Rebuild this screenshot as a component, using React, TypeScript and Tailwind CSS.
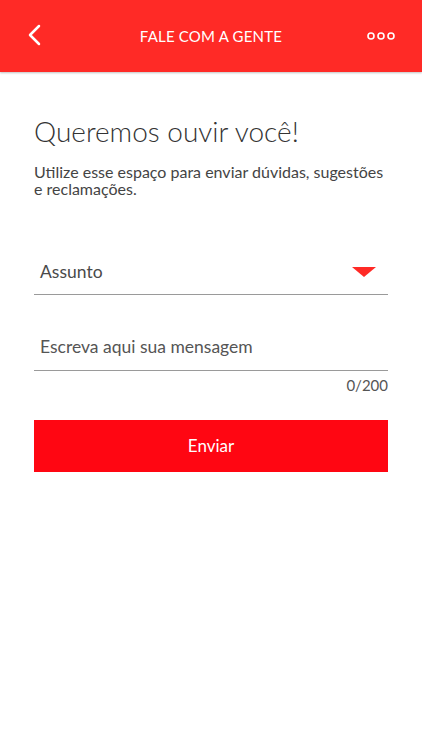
export default function App() {
  return (
    <div
      className="min-h-[750px] w-full bg-white"
      style={{ fontFamily: "Lato, 'Open Sans', sans-serif" }}
    >
      <Header />
      <div className="px-[34px] pt-[42px]">
        <h1 className="text-[28px] font-light leading-[34px] text-[#333]">
          Queremos ouvir você!
        </h1>
        <p className="mt-[15px] w-[352px] text-[16px] leading-[17px] text-[#444]">
          Utilize esse espaço para enviar dúvidas, sugestões e reclamações.
        </p>

        <div className="mt-[63px] flex items-center justify-between border-b border-[#9a9a9a] pb-[10px] pl-[6px] pr-[12px]">
          <span className="text-[17.5px] leading-[24px] text-[#4a4a4a]">Assunto</span>
          <svg width="24" height="10" viewBox="0 0 24 10">
            <path d="M0 0 L24 0 L12 10 Z" fill="#ff2a26" />
          </svg>
        </div>

        <div className="mt-[40px] border-b border-[#9a9a9a] pb-[11px] pl-[6px]">
          <span className="text-[17.5px] leading-[24px] text-[#555]">
            Escreva aqui sua mensagem
          </span>
        </div>
        <div className="mt-[3px] text-right text-[15px] text-[#555]">0/200</div>

        <button className="mt-[23px] flex h-[52px] w-full items-center justify-center bg-[#ff0612] text-[17px] text-white">
          Enviar
        </button>
      </div>
    </div>
  );
}

function Header() {
  return (
    <div className="grid h-[72px] grid-cols-[80px_1fr_80px] items-center bg-[#ff2a26] shadow-[0_1px_2px_rgba(0,0,0,0.25)]">
      <div className="pl-[26px]">
        <svg width="16" height="22" viewBox="0 0 16 22" className="mt-[-2px]">
          <path
            d="M13 2 L4 11 L13 20"
            fill="none"
            stroke="white"
            strokeWidth="2.5"
            strokeLinecap="round"
            strokeLinejoin="round"
          />
        </svg>
      </div>
      <span className="text-center text-[15px] tracking-[0.2px] text-white">
        FALE COM A GENTE
      </span>
      <div className="flex justify-end pr-[27px]">
        <svg width="28" height="10" viewBox="0 0 28 10">
          <circle cx="4" cy="5" r="3" fill="none" stroke="white" strokeWidth="1.6" />
          <circle cx="14" cy="5" r="3" fill="none" stroke="white" strokeWidth="1.6" />
          <circle cx="24" cy="5" r="3" fill="none" stroke="white" strokeWidth="1.6" />
        </svg>
      </div>
    </div>
  );
}
